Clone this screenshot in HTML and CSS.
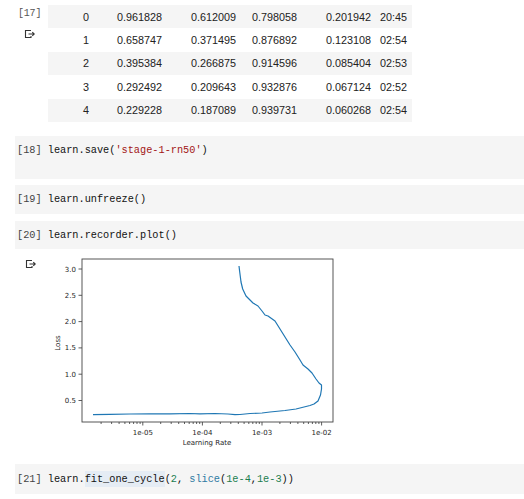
FILE: index.html
```html
<!DOCTYPE html>
<html>
<head>
<meta charset="utf-8">
<link rel="stylesheet" href="styles.css">
</head>
<body>
<div class="out out-table">
  <div class="gutter">
    <div class="count">[17]</div>
    <svg class="out-icon" width="12" height="10" viewBox="0 0 12 10"><path d="M7 1.5H1.5v7H7V7" fill="none" stroke="#333" stroke-width="1.1"/><path d="M4.5 5h5.5M8.3 3.2 10.2 5 8.3 6.8" fill="none" stroke="#333" stroke-width="1.1"/></svg>
  </div>
  <div class="table">
    <div class="row shade"><span>0</span><span>0.961828</span><span>0.612009</span><span>0.798058</span><span>0.201942</span><span>20:45</span></div>
    <div class="row"><span>1</span><span>0.658747</span><span>0.371495</span><span>0.876892</span><span>0.123108</span><span>02:54</span></div>
    <div class="row shade"><span>2</span><span>0.395384</span><span>0.266875</span><span>0.914596</span><span>0.085404</span><span>02:53</span></div>
    <div class="row"><span>3</span><span>0.292492</span><span>0.209643</span><span>0.932876</span><span>0.067124</span><span>02:52</span></div>
    <div class="row shade"><span>4</span><span>0.229228</span><span>0.187089</span><span>0.939731</span><span>0.060268</span><span>02:54</span></div>
  </div>
</div>

<div class="code tall"><span class="num">[18]</span> learn.save(<span class="str">'stage-1-rn50'</span>)</div>
<div class="code gap6"><span class="num">[19]</span> learn.unfreeze()</div>
<div class="code gap7"><span class="num">[20]</span> learn.recorder.plot()</div>

<div class="out out-plot">
  <div class="gutter plot-gutter">
    <svg class="out-icon" width="12" height="10" viewBox="0 0 12 10"><path d="M7 1.5H1.5v7H7V7" fill="none" stroke="#333" stroke-width="1.1"/><path d="M4.5 5h5.5M8.3 3.2 10.2 5 8.3 6.8" fill="none" stroke="#333" stroke-width="1.1"/></svg>
  </div>
  <svg class="plot" width="300" height="200" viewBox="0 0 300 200">
    <g stroke="#333" stroke-width="0.8" fill="none">
      <path d="M42 18h-3.5M42 44.3h-3.5M42 70.6h-3.5M42 96.9h-3.5M42 123.2h-3.5M42 149.5h-3.5"/>
      <path d="M102.8 171v3.5M162.4 171v3.5M222 171v3.5M281.6 171v3.5"/>
      <path d="M61.1 171v2M71.6 171v2M79.1 171v2M84.9 171v2M89.6 171v2M93.6 171v2M97 171v2M100.1 171v2M120.7 171v2M131.2 171v2M138.7 171v2M144.5 171v2M149.2 171v2M153.2 171v2M156.6 171v2M159.7 171v2M180.3 171v2M190.8 171v2M198.3 171v2M204.1 171v2M208.8 171v2M212.8 171v2M216.2 171v2M219.3 171v2M239.9 171v2M250.4 171v2M257.9 171v2M263.7 171v2M268.4 171v2M272.4 171v2M275.8 171v2M278.9 171v2"/>
    </g>
    <path d="M53 163.6L70 163.3L90 163L110 162.9L130 162.8L150 162.5L160 162.8L175 162.5L188 163L195 163.6L200 163.5L210 162.5L222 162L230 161L245 159.5L256 158L264 156L270 154.5L274 153L278 150L280.5 144L281.5 138L281.5 134L279 132L276 128L272 122L268 118L263 114L260 109L255 101L250 94L245 86L240 78L235 70L228 65L225 64L222 60L218 55L213 52L210 49L206 45L202.7 38L201 31L200.5 27L199.6 20L199 15" fill="none" stroke="#1f77b4" stroke-width="1.2" stroke-linejoin="round"/>
    <rect x="42" y="8" width="251" height="163" fill="none" stroke="#444" stroke-width="0.9"/>
    <g class="ticklbl" text-anchor="end">
      <text x="36" y="20.5">3.0</text>
      <text x="36" y="46.8">2.5</text>
      <text x="36" y="73.1">2.0</text>
      <text x="36" y="99.4">1.5</text>
      <text x="36" y="125.7">1.0</text>
      <text x="36" y="152">0.5</text>
    </g>
    <g class="ticklbl" text-anchor="middle">
      <text x="102.8" y="184">1e-05</text>
      <text x="162.4" y="184">1e-04</text>
      <text x="222" y="184">1e-03</text>
      <text x="281.6" y="184">1e-02</text>
      <text x="167" y="194">Learning Rate</text>
      <text transform="translate(20 92) rotate(-90)">Loss</text>
    </g>
  </svg>
</div>

<div class="code last"><span class="num">[21]</span> learn.<span class="hl">fit_one_cycle</span>(<span class="n">2</span>, <span class="fn">slice</span>(<span class="n">1e-4</span>,<span class="n">1e-3</span>))</div>
</body>
</html>
```

FILE: styles.css
```css
html, body {
  margin: 0;
  padding: 0;
  background: #ffffff;
}

body {
  width: 524px;
  overflow: hidden;
}

.out {
  display: flex;
}

.out-table {
  padding-top: 5px;
}

.gutter {
  width: 48px;
  flex: none;
  display: flex;
  flex-direction: column;
}

.count {
  font-family: "Liberation Mono", monospace;
  font-size: 10px;
  color: #555;
  margin-left: 18px;
  margin-top: 3px;
  line-height: 12px;
  letter-spacing: -0.2px;
}

.out-icon {
  display: block;
  margin-left: 24px;
  margin-top: 9px;
}

.table {
  width: 364px;
  font-family: "Liberation Sans", Arial, sans-serif;
  font-size: 10.8px;
  color: #222;
}

.row {
  display: grid;
  grid-template-columns: 34px 74px 61px 74px 54px 32px;
  padding-left: 35px;
  height: 23.4px;
  align-items: center;
}

.row.shade {
  background: #f5f5f5;
}

.code {
  margin-left: 15px;
  background: #f5f5f5;
  font-family: "Liberation Mono", "Courier New", monospace;
  font-size: 10.25px;
  line-height: 15px;
  color: #111;
  padding: 7px 2px 7px 2px;
  white-space: pre;
}

.code.tall {
  margin-top: 14px;
  padding-bottom: 21px;
}

.code.gap6 {
  margin-top: 6px;
}

.code.gap7 {
  margin-top: 7px;
  padding-bottom: 6px;
}

.code.last {
  margin-top: 13px;
  padding-top: 8px;
}

.num {
  color: #444;
}

.str {
  color: #a31515;
}

.n {
  color: #1a7d4f;
}

.fn {
  color: #2f7aa3;
}

.hl {
  background: #e5ecf4;
  padding: 2px 0 2px 0;
}

.out-plot {
  margin-top: 2px;
}

.plot-gutter {
  width: 40px;
}

.plot-gutter .out-icon {
  margin-left: 25px;
  margin-top: 8px;
}

.plot {
  display: block;
  flex: none;
}

.ticklbl {
  font-family: "DejaVu Sans", sans-serif;
  font-size: 7px;
  fill: #262626;
}
```
